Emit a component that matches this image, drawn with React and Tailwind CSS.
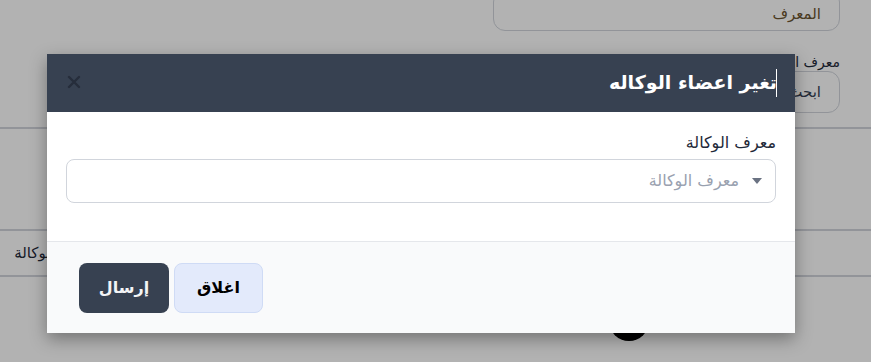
import React from "react";

const font = { fontFamily: '"DejaVu Sans", "Noto Sans", sans-serif' };

export default function App() {
  return (
    <div dir="rtl" className="relative w-[871px] h-[362px] overflow-hidden bg-white text-gray-800" style={font}>
      {/* Page behind the modal */}
      <div className="flex flex-col">
        <div className="flex justify-start pr-[31px]">
          <div className="w-[347px] h-[41px] -mt-[10px] rounded-xl border border-gray-300 flex items-center px-[18px] pt-[8px] text-[15px] text-[#6b5430]">
            المعرف
          </div>
        </div>
        <div className="pr-[31px] pt-[24px] text-[14px] text-gray-800 leading-none">معرف الوكالة</div>
        <div className="flex justify-start pr-[31px] pt-[2px]">
          <div className="w-[400px] h-[42px] rounded-xl border border-gray-300 flex items-center px-[18px] text-[15px] text-gray-700">
            ابحث
          </div>
        </div>
        <div className="mt-[14px] h-[102px] border-t-2 border-gray-300"></div>
        <div className="h-[48px] border-y-2 border-gray-300 flex items-center pr-[816px] text-[15px] text-gray-800">
          الوكالة
        </div>
        <div className="flex items-center gap-[30px] pr-[222px] pt-[24px]">
          <div className="w-[40px] h-[40px] rounded-full bg-black"></div>
          <div className="text-[13px] text-[#1e2a4a] pt-[12px]">0313 1234567</div>
        </div>
      </div>

      {/* Overlay */}
      <div className="absolute inset-0 bg-black/30"></div>

      {/* Modal */}
      <div className="absolute left-[47px] top-[54px] w-[748px] h-[279px] bg-white shadow-[0_6px_16px_rgba(0,0,0,0.35)] flex flex-col">
        <div className="h-[58px] bg-[#374151] flex items-center justify-between pr-[18px] pl-[20px]">
          <div className="flex items-center">
            <span className="w-px h-[28px] bg-white -ml-[1px]"></span>
            <h2 className="text-[19px] font-bold text-white leading-none pb-[2px]">تغير اعضاء الوكاله</h2>
          </div>
          <svg width="14" height="14" viewBox="0 0 14 14" className="text-[#262d3b] mt-[-2px]">
            <path d="M2 2 L12 12 M12 2 L2 12" stroke="currentColor" strokeWidth="2.4" strokeLinecap="round" />
          </svg>
        </div>

        <div className="h-[129px] px-[19px] pt-[20px]">
          <label className="block text-[16px] font-medium text-gray-800 leading-[22px] mb-[5px]">معرف الوكالة</label>
          <div className="h-[44px] rounded-lg border border-gray-300 flex items-center pr-[13px] gap-[13px]">
            <svg width="10" height="7" viewBox="0 0 10 7" className="text-gray-500">
              <path d="M0 0 L10 0 L5 6 Z" fill="currentColor" />
            </svg>
            <span className="text-[16px] text-gray-400">معرف الوكالة</span>
          </div>
        </div>

        <div className="flex-1 bg-gray-50 border-t border-gray-200 flex items-start justify-end pl-[32px] pt-[21px] gap-[5px]">
          <button className="w-[89px] h-[50px] rounded-lg bg-[#e3eafb] border border-[#cfdbf5] text-[16px] font-bold text-black">
            اغلاق
          </button>
          <button className="w-[90px] h-[50px] rounded-lg bg-[#374151] text-[16px] font-bold text-gray-100">
            إرسال
          </button>
        </div>
      </div>
    </div>
  );
}
